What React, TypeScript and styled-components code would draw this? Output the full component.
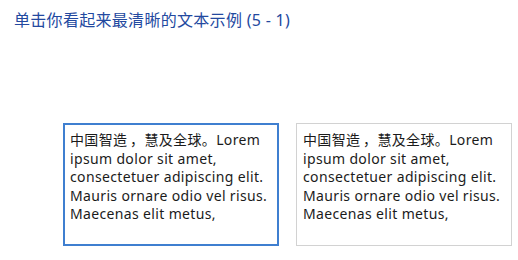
import React from 'react';
import styled, { createGlobalStyle } from 'styled-components';

const GlobalStyle = createGlobalStyle`
  html, body {
    margin: 0;
    padding: 0;
    background: #ffffff;
  }
  body {
    font-family: "Noto Sans", "Noto Sans CJK SC", sans-serif;
  }
`;

const Page = styled.div`
  width: 518px;
  height: 260px;
  box-sizing: border-box;
  padding: 9px 0 0 14px;
  display: flex;
  flex-flow: column nowrap;
`;

const Title = styled.h1`
  margin: 0;
  font-family: "Noto Sans", "Noto Sans CJK SC", sans-serif;
  font-weight: 400;
  font-size: 16px;
  line-height: 22px;
  letter-spacing: 0.3px;
  color: #23499f;
`;

const Options = styled.div`
  display: flex;
  gap: 17px;
  margin: 92px 0 0 49px;
`;

const Sample = styled.div<{ $selected?: boolean }>`
  box-sizing: border-box;
  width: 216px;
  height: 123px;
  padding: ${(p) => (p.$selected ? '6px 5px' : '7px 6px')};
  border: ${(p) => (p.$selected ? '2px solid #3f7fd0' : '1px solid #d2d2d2')};
  background: #ffffff;
  font-family: "Noto Sans", "Noto Sans CJK SC", sans-serif;
  font-size: 14px;
  line-height: 18.5px;
  letter-spacing: 0.35px;
  color: #1b1b1b;
`;

const SAMPLE =
  '中国智造\u2009，慧及全球。Lorem ipsum dolor sit amet, consectetuer adipiscing elit. Mauris ornare odio vel risus. Maecenas elit metus,';

const App: React.FC = () => (
  <>
    <GlobalStyle />
    <Page>
      <Title>单击你看起来最清晰的文本示例 (5 - 1)</Title>
      <Options>
        <Sample $selected>{SAMPLE}</Sample>
        <Sample>{SAMPLE}</Sample>
      </Options>
    </Page>
  </>
);

export default App;
